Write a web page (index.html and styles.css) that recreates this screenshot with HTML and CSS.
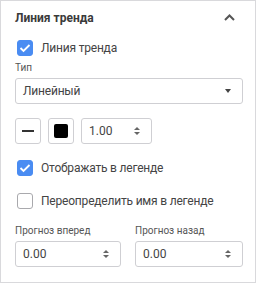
FILE: index.html
```html
<!DOCTYPE html>
<html lang="ru">
<head>
  <meta charset="UTF-8">
  <title>Линия тренда</title>
  <link rel="stylesheet" href="styles.css">
</head>
<body>
  <div class="panel">
    <div class="panel-header">
      <span class="panel-title">Линия тренда</span>
      <svg class="chevron" width="11" height="7" viewBox="0 0 11 7"><path d="M1 6 L5.5 1.5 L10 6" fill="none" stroke="#555" stroke-width="2"/></svg>
    </div>

    <div class="panel-body">
      <label class="check check-first">
        <span class="box checked">
          <svg width="12" height="10" viewBox="0 0 12 10"><path d="M1.5 5 L4.5 8 L10.5 2" fill="none" stroke="#fff" stroke-width="1.8"/></svg>
        </span>
        Линия тренда
      </label>

      <div class="caption caption-type">Тип</div>
      <div class="select">
        <span>Линейный</span>
        <span class="caret"></span>
      </div>

      <div class="tools">
        <div class="tool-btn"><span class="line-icon"></span></div>
        <div class="tool-btn"><span class="color-icon"></span></div>
        <div class="spin spin-small">
          <span>1.00</span>
          <span class="arrows"><i class="up"></i><i class="down"></i></span>
        </div>
      </div>

      <label class="check check-legend">
        <span class="box checked">
          <svg width="12" height="10" viewBox="0 0 12 10"><path d="M1.5 5 L4.5 8 L10.5 2" fill="none" stroke="#fff" stroke-width="1.8"/></svg>
        </span>
        Отображать в легенде
      </label>

      <label class="check check-rename">
        <span class="box"></span>
        Переопределить имя в легенде
      </label>

      <div class="forecast">
        <div class="forecast-col">
          <div class="caption">Прогноз вперед</div>
          <div class="spin">
            <span>0.00</span>
            <span class="arrows"><i class="up"></i><i class="down"></i></span>
          </div>
        </div>
        <div class="forecast-col">
          <div class="caption">Прогноз назад</div>
          <div class="spin">
            <span>0.00</span>
            <span class="arrows"><i class="up"></i><i class="down"></i></span>
          </div>
        </div>
      </div>
    </div>
  </div>
</body>
</html>
```

FILE: styles.css
```css
body { margin: 0; background: #fff; font-family: Roboto, "Noto Sans", sans-serif; color: #444; }
.panel {
  box-sizing: border-box;
  width: 256px;
  height: 283px;
  border: 1px solid #d9d9dc;
  background: #fff;
}
.panel-header {
  height: 32px;
  display: flex;
  align-items: center;
  justify-content: space-between;
  padding: 0 20px 0 14px;
}
.panel-title { font-size: 12px; font-weight: bold; color: #3a3a3a; padding-top: 1px; }
.chevron { display: block; }
.panel-body { padding: 0 12px 0 14px; }

.check {
  display: flex;
  align-items: center;
  gap: 8px;
  height: 16px;
  font-size: 12px;
  letter-spacing: -0.2px;
  color: #444;
  padding-left: 2px;
}
.check-first { margin-top: 7px; }
.check-legend { margin-top: 16px; }
.check-rename { margin-top: 17px; }
.box {
  box-sizing: border-box;
  width: 16px;
  height: 16px;
  border-radius: 3px;
  border: 1px solid #a9a9ad;
  display: flex;
  align-items: center;
  justify-content: center;
  flex-shrink: 0;
}
.box.checked { background: #4a8cf2; border-color: #4a8cf2; }

.caption { font-size: 10px; line-height: 12px; color: #555; }
.caption-type { margin-top: 6px; }

.select {
  box-sizing: border-box;
  margin-top: 4px;
  height: 26px;
  border: 1px solid #cfcfd3;
  border-radius: 3px;
  display: flex;
  align-items: center;
  justify-content: space-between;
  padding: 0 11px 0 7px;
  font-size: 12px;
  letter-spacing: -0.2px;
  color: #444;
}
.caret {
  width: 0;
  height: 0;
  border-left: 3px solid transparent;
  border-right: 3px solid transparent;
  border-top: 4px solid #444;
}

.tools { display: flex; gap: 7px; margin-top: 14px; }
.tool-btn {
  box-sizing: border-box;
  width: 26px;
  height: 26px;
  border: 1px solid #cfcfd3;
  border-radius: 3px;
  display: flex;
  align-items: center;
  justify-content: center;
}
.line-icon { width: 12px; height: 2px; background: #333; }
.color-icon { width: 14px; height: 14px; background: #000; border-radius: 2px; }

.spin {
  box-sizing: border-box;
  height: 26px;
  border: 1px solid #cfcfd3;
  border-radius: 3px;
  display: flex;
  align-items: center;
  justify-content: space-between;
  padding: 0 11px 0 7px;
  font-size: 12px;
  color: #444;
}
.spin-small { width: 71px; }
.arrows { display: flex; flex-direction: column; gap: 2px; }
.arrows i {
  display: block;
  width: 0;
  height: 0;
  border-left: 3px solid transparent;
  border-right: 3px solid transparent;
}
.arrows .up { border-bottom: 3px solid #666; }
.arrows .down { border-top: 3px solid #666; }

.forecast { display: flex; gap: 14px; margin-top: 16px; }
.forecast-col { flex: 1; }
.forecast-col:first-child { flex: 0 0 106px; }
.forecast .spin { margin-top: 4px; }
```
